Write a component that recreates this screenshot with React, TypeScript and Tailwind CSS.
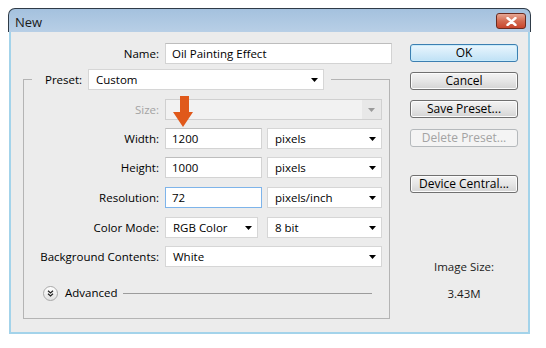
import React from 'react';

function Arrow({ disabled }: { disabled?: boolean }) {
  return (
    <svg width="7" height="4" viewBox="0 0 7 4" className="shrink-0">
      <path d="M0 0h7L3.5 4z" fill={disabled ? '#9a9a9a' : '#000'} />
    </svg>
  );
}

function Select({ value, className }: { value: string; className: string }) {
  return (
    <div className={`h-[21px] bg-white border border-[#d6d6d6] flex items-center justify-between pl-[7px] pr-[5px] ${className}`}>
      <span>{value}</span>
      <Arrow />
    </div>
  );
}

function Input({ value, className }: { value: string; className: string }) {
  return (
    <div className={`h-[21px] bg-white border border-[#d3d3d3] border-t-[#bdbdbd] flex items-center pl-[6px] ${className}`}>
      {value}
    </div>
  );
}

function Row({ label, children, className = '' }: { label: string; children: React.ReactNode; className?: string }) {
  return (
    <div className={`flex items-center ${className}`}>
      <div className="w-[136px] text-right pr-[1px]">{label}</div>
      <div className="ml-[5px] flex gap-[5px]">{children}</div>
    </div>
  );
}

function Button({ label, className = '', disabled, primary }: { label: string; className?: string; disabled?: boolean; primary?: boolean }) {
  const base = disabled
    ? 'border-[#b5b9bc] bg-[#f4f4f4] text-[#a3a3a3]'
    : primary
    ? 'border-[#3c7fb1] bg-gradient-to-b from-[#eaf6fd] to-[#bfe1f5] shadow-[inset_0_0_0_1px_#c8ebfb]'
    : 'border-[#707070] bg-gradient-to-b from-[#f3f3f3] via-[#e6e6e6] to-[#d4d4d4] shadow-[inset_0_0_0_1px_#fcfcfc]';
  return (
    <div className={`h-[18px] w-[108px] rounded-[3px] border flex items-center justify-center leading-none text-[12px] ${base} ${className}`}>
      {label}
    </div>
  );
}

export default function App() {
  return (
    <div className="relative w-[546px] h-[348px] bg-white pl-[8px] pt-[8px] text-[11.5px] text-black font-['Open_Sans',sans-serif]">
      <div className="w-[523px] flex flex-col">
        {/* title bar */}
        <div className="h-[24px] rounded-t-[7px] border-t border-x border-[#2f3b47] bg-gradient-to-b from-[#a4c1de] to-[#b8cfe6] flex justify-between pl-[6px] pr-[4px]">
          <span className="mt-[4px] text-[13px] text-[#1b1b1b]">New</span>
          <div className="mt-[4px] h-[16px] w-[30px] rounded-[3px] border border-[#6b2b1f] bg-gradient-to-b from-[#e6a795] via-[#d36a50] to-[#c8452c] flex items-center justify-center">
            <svg width="11" height="9" viewBox="0 0 11 9">
              <path d="M1.5 1l8 7M9.5 1l-8 7" stroke="#fff" strokeWidth="2.4" strokeLinecap="round" />
            </svg>
          </div>
        </div>

        {/* body */}
        <div className="mx-[1px] h-[302px] bg-[#ececec] border-x-2 border-b-2 border-[#a3d3ea] flex pt-[11px]">
          {/* form column */}
          <div className="w-[381px] flex flex-col">
            <div className="flex items-center">
              <div className="w-[149px] text-right pr-[1px]">Name:</div>
              <Input value="Oil Painting Effect" className="ml-[5px] w-[227px]" />
            </div>

            <div className="ml-[12px] mt-[15px] w-[367px] h-[240px] border border-[#b4b4b4] flex flex-col">
              <div className="-mt-[11px] ml-[8px] self-start bg-[#ececec] flex items-center pl-[13px] pr-[7px]">
                <span className="w-[37px]">Preset:</span>
                <Select value="Custom" className="ml-[6px] w-[236px]" />
              </div>

              <Row label="Size:" className="mt-[9px] text-[#a3a3a3]">
                <div className="h-[21px] w-[217px] border border-[#d0d0d0] bg-[#f2f2f2] flex items-center justify-end">
                  <div className="h-full w-[19px] bg-[#e8e8e8] flex items-center justify-center">
                    <Arrow disabled />
                  </div>
                </div>
              </Row>

              <Row label="Width:" className="mt-[8px]">
                <Input value="1200" className="w-[97px]" />
                <Select value="pixels" className="w-[115px]" />
              </Row>

              <Row label="Height:" className="mt-[8px]">
                <Input value="1000" className="w-[97px]" />
                <Select value="pixels" className="w-[115px]" />
              </Row>

              <Row label="Resolution:" className="mt-[9px]">
                <div className="h-[21px] w-[97px] bg-white border border-[#7eb4ea] flex items-center pl-[6px]">72</div>
                <Select value="pixels/inch" className="w-[115px]" />
              </Row>

              <Row label="Color Mode:" className="mt-[9px]">
                <Select value="RGB Color" className="w-[93px]" />
                <Select value="8 bit" className="ml-[4px] w-[115px]" />
              </Row>

              <Row label="Background Contents:" className="mt-[8px]">
                <Select value="White" className="w-[217px]" />
              </Row>

              <div className="mt-[18px] ml-[19px] h-[16px] flex items-center">
                <div className="h-[15px] w-[15px] rounded-full border border-[#a9a9a9] bg-gradient-to-b from-white to-[#e2e2e2] flex items-center justify-center">
                  <svg width="7" height="7" viewBox="0 0 7 7">
                    <path d="M1 0.8l2.5 2.2L6 0.8M1 3.8l2.5 2.2L6 3.8" fill="none" stroke="#222" strokeWidth="1.2" />
                  </svg>
                </div>
                <span className="ml-[7px] w-[52px]">Advanced</span>
                <div className="ml-[6px] w-[249px] h-px bg-[#9c9c9c]" />
              </div>
            </div>
          </div>

          {/* buttons column */}
          <div className="ml-[18px] w-[108px] flex flex-col items-center">
            <Button label="OK" primary className="mt-[1px]" />
            <Button label="Cancel" className="mt-[10px]" />
            <Button label="Save Preset..." className="mt-[10px]" />
            <Button label="Delete Preset..." disabled className="mt-[11px]" />
            <Button label="Device Central..." className="mt-[28px]" />
            <div className="mt-[66px] leading-[16px] text-[#1b1b1b]">Image Size:</div>
            <div className="mt-[11px] leading-[16px] text-[#1b1b1b]">3.43M</div>
          </div>
        </div>
      </div>

      {/* orange annotation arrow */}
      <svg className="absolute left-[173px] top-[96px]" width="20" height="31" viewBox="0 0 20 31">
        <path d="M7 0h9v16h4L10 31 0 16h7z" fill="#e0591b" />
      </svg>
    </div>
  );
}
